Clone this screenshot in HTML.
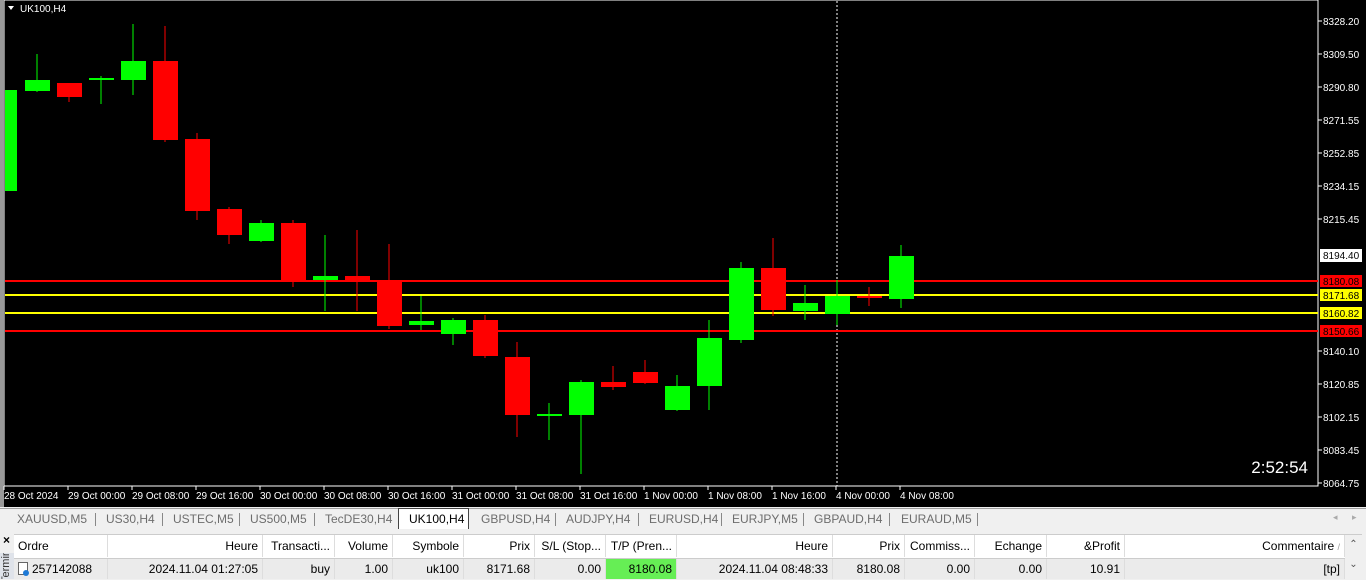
<!DOCTYPE html>
<html><head><meta charset="utf-8"><style>
*{margin:0;padding:0;box-sizing:border-box}
body{width:1366px;height:579px;overflow:hidden;background:#f0f0f0;font-family:"Liberation Sans",sans-serif;position:relative}
#chart{position:absolute;left:0;top:0;width:1366px;height:507px;background:#000}
.tabs{position:absolute;left:0;top:508px;width:1366px;height:21px;background:#f0f0f0;border-top:1px solid #a0a0a0;font-size:12px;color:#6d6d6d}
.tabs span{position:absolute;top:3px}
.tabs i{position:absolute;top:4px;width:1px;height:13px;background:#888}
.act{position:absolute;top:-1px;height:21px;background:#fff;border:1px solid #444;border-bottom:none;color:#000;padding:3px 10px 0}
.tbl{position:absolute;left:14px;top:534px;width:1348px;height:45px;background:#fff;font-size:12px;color:#000;border-top:1px solid #ccc}
.c{position:absolute;height:22px;line-height:22px;border-right:1px solid #ddd;padding:0 4px;white-space:nowrap;overflow:hidden}
.r{text-align:right}
.row{position:absolute;left:0;top:23px;height:21px;width:1331px;background:#ebebeb;border-top:1px solid #ccc}
.row .c{height:20px;line-height:20px}
</style></head><body>
<div id="chart">
<svg width="1366" height="507" xmlns="http://www.w3.org/2000/svg" font-family="Liberation Sans, sans-serif">
<rect x="4" y="0" width="1314" height="486" fill="none" stroke="#fff" stroke-width="1"/>
<rect x="0" y="0" width="4" height="507" fill="#999"/>
<polygon points="8,6 14,6 11,10" fill="#fff"/>
<text x="20" y="12" fill="#fff" font-size="10">UK100,H4</text>
<line x1="837" y1="1" x2="837" y2="486" stroke="#fff" stroke-dasharray="2,2"/>
<g stroke-width="2">
<line x1="5" y1="281" x2="1318" y2="281" stroke="#f00"/>
<line x1="5" y1="295" x2="1318" y2="295" stroke="#ff0"/>
<line x1="5" y1="313" x2="1318" y2="313" stroke="#ff0"/>
<line x1="5" y1="331" x2="1318" y2="331" stroke="#f00"/>
</g>
<g>
<g fill="#0f0" stroke="#0f0">
<rect x="5" y="90" width="12" height="101" stroke="none"/>
<line x1="37" y1="54" x2="37" y2="92"/><rect x="25" y="80" width="25" height="11" stroke="none"/>
<line x1="101" y1="76" x2="101" y2="104"/><rect x="89" y="78" width="25" height="2" stroke="none"/>
<line x1="133" y1="24" x2="133" y2="95"/><rect x="121" y="61" width="25" height="19" stroke="none"/>
<line x1="261" y1="220" x2="261" y2="242"/><rect x="249" y="223" width="25" height="18" stroke="none"/>
<line x1="325" y1="235" x2="325" y2="311"/><rect x="313" y="276" width="25" height="4" stroke="none"/>
<line x1="421" y1="296" x2="421" y2="330"/><rect x="409" y="321" width="25" height="4" stroke="none"/>
<line x1="453" y1="318" x2="453" y2="345"/><rect x="441" y="320" width="25" height="14" stroke="none"/>
<line x1="549" y1="403" x2="549" y2="440"/><rect x="537" y="414" width="25" height="2" stroke="none"/>
<line x1="581" y1="380" x2="581" y2="474"/><rect x="569" y="382" width="25" height="33" stroke="none"/>
<line x1="677" y1="375" x2="677" y2="411"/><rect x="665" y="386" width="25" height="24" stroke="none"/>
<line x1="709" y1="320" x2="709" y2="410"/><rect x="697" y="338" width="25" height="48" stroke="none"/>
<line x1="741" y1="262" x2="741" y2="343"/><rect x="729" y="268" width="25" height="72" stroke="none"/>
<line x1="805" y1="285" x2="805" y2="320"/><rect x="793" y="303" width="25" height="8" stroke="none"/>
<line x1="837" y1="280" x2="837" y2="325"/><rect x="825" y="296" width="25" height="18" stroke="none"/>
<line x1="901" y1="245" x2="901" y2="308"/><rect x="889" y="256" width="25" height="43" stroke="none"/>
</g>
<g fill="#f00" stroke="#f00">
<line x1="69" y1="83" x2="69" y2="102"/><rect x="57" y="83" width="25" height="14" stroke="none"/>
<line x1="165" y1="26" x2="165" y2="142"/><rect x="153" y="61" width="25" height="79" stroke="none"/>
<line x1="197" y1="133" x2="197" y2="220"/><rect x="185" y="139" width="25" height="72" stroke="none"/>
<line x1="229" y1="207" x2="229" y2="244"/><rect x="217" y="209" width="25" height="26" stroke="none"/>
<line x1="293" y1="220" x2="293" y2="287"/><rect x="281" y="223" width="25" height="57" stroke="none"/>
<line x1="357" y1="230" x2="357" y2="311"/><rect x="345" y="276" width="25" height="4" stroke="none"/>
<line x1="389" y1="244" x2="389" y2="329"/><rect x="377" y="280" width="25" height="46" stroke="none"/>
<line x1="485" y1="315" x2="485" y2="358"/><rect x="473" y="320" width="25" height="36" stroke="none"/>
<line x1="517" y1="342" x2="517" y2="437"/><rect x="505" y="357" width="25" height="58" stroke="none"/>
<line x1="613" y1="366" x2="613" y2="390"/><rect x="601" y="382" width="25" height="5" stroke="none"/>
<line x1="645" y1="360" x2="645" y2="384"/><rect x="633" y="372" width="25" height="11" stroke="none"/>
<line x1="773" y1="238" x2="773" y2="316"/><rect x="761" y="268" width="25" height="42" stroke="none"/>
<line x1="869" y1="287" x2="869" y2="306"/><rect x="857" y="296" width="25" height="2" stroke="none"/>
</g>
</g>
<g fill="#fff" font-size="10">
<text x="1323" y="25">8328.20</text><text x="1323" y="58">8309.50</text><text x="1323" y="91">8290.80</text>
<text x="1323" y="124">8271.55</text><text x="1323" y="157">8252.85</text><text x="1323" y="190">8234.15</text>
<text x="1323" y="223">8215.45</text><text x="1323" y="355">8140.10</text><text x="1323" y="388">8120.85</text>
<text x="1323" y="421">8102.15</text><text x="1323" y="454">8083.45</text><text x="1323" y="487">8064.75</text>
</g>
<g stroke="#fff"><line x1="1318" y1="21" x2="1322" y2="21"/><line x1="1318" y1="54" x2="1322" y2="54"/><line x1="1318" y1="87" x2="1322" y2="87"/><line x1="1318" y1="120" x2="1322" y2="120"/><line x1="1318" y1="153" x2="1322" y2="153"/><line x1="1318" y1="186" x2="1322" y2="186"/><line x1="1318" y1="219" x2="1322" y2="219"/><line x1="1318" y1="351" x2="1322" y2="351"/><line x1="1318" y1="384" x2="1322" y2="384"/><line x1="1318" y1="417" x2="1322" y2="417"/><line x1="1318" y1="450" x2="1322" y2="450"/><line x1="1318" y1="483" x2="1322" y2="483"/></g>
<rect x="1320" y="249" width="42" height="13" fill="#fff"/><text x="1323" y="259" fill="#000" font-size="10">8194.40</text>
<rect x="1320" y="275" width="42" height="12" fill="#f00"/><text x="1323" y="285" fill="#000" font-size="10">8180.08</text>
<rect x="1320" y="289" width="42" height="12" fill="#ff0"/><text x="1323" y="299" fill="#000" font-size="10">8171.68</text>
<rect x="1320" y="307" width="42" height="12" fill="#ff0"/><text x="1323" y="317" fill="#000" font-size="10">8160.82</text>
<rect x="1320" y="325" width="42" height="12" fill="#f00"/><text x="1323" y="335" fill="#000" font-size="10">8150.66</text>
<text x="1308" y="473" fill="#fff" font-size="17" text-anchor="end">2:52:54</text>
<g fill="#fff" font-size="10">
<text x="4" y="499">28 Oct 2024</text><text x="68" y="499">29 Oct 00:00</text><text x="132" y="499">29 Oct 08:00</text>
<text x="196" y="499">29 Oct 16:00</text><text x="260" y="499">30 Oct 00:00</text><text x="324" y="499">30 Oct 08:00</text>
<text x="388" y="499">30 Oct 16:00</text><text x="452" y="499">31 Oct 00:00</text><text x="516" y="499">31 Oct 08:00</text>
<text x="580" y="499">31 Oct 16:00</text><text x="644" y="499">1 Nov 00:00</text><text x="708" y="499">1 Nov 08:00</text>
<text x="772" y="499">1 Nov 16:00</text><text x="836" y="499">4 Nov 00:00</text><text x="900" y="499">4 Nov 08:00</text>
</g>
<g stroke="#fff"><line x1="4" y1="486" x2="4" y2="490"/><line x1="68" y1="486" x2="68" y2="490"/><line x1="132" y1="486" x2="132" y2="490"/><line x1="196" y1="486" x2="196" y2="490"/><line x1="260" y1="486" x2="260" y2="490"/><line x1="324" y1="486" x2="324" y2="490"/><line x1="388" y1="486" x2="388" y2="490"/><line x1="452" y1="486" x2="452" y2="490"/><line x1="516" y1="486" x2="516" y2="490"/><line x1="580" y1="486" x2="580" y2="490"/><line x1="644" y1="486" x2="644" y2="490"/><line x1="708" y1="486" x2="708" y2="490"/><line x1="772" y1="486" x2="772" y2="490"/><line x1="836" y1="486" x2="836" y2="490"/><line x1="900" y1="486" x2="900" y2="490"/></g>
</svg>
</div>
<div class="tabs">
<span style="left:17px">XAUUSD,M5</span><i style="left:95px"></i>
<span style="left:106px">US30,H4</span><i style="left:162px"></i>
<span style="left:173px">USTEC,M5</span><i style="left:239px"></i>
<span style="left:250px">US500,M5</span><i style="left:314px"></i>
<span style="left:325px">TecDE30,H4</span>
<div class="act" style="left:398px;width:71px">UK100,H4</div>
<span style="left:481px">GBPUSD,H4</span><i style="left:555px"></i>
<span style="left:566px">AUDJPY,H4</span><i style="left:638px"></i>
<span style="left:649px">EURUSD,H4</span><i style="left:721px"></i>
<span style="left:732px">EURJPY,M5</span><i style="left:803px"></i>
<span style="left:814px">GBPAUD,H4</span><i style="left:889px"></i>
<span style="left:901px">EURAUD,M5</span><i style="left:977px"></i>
<span style="left:1333px;color:#aaa;font-size:9px">◂</span><span style="left:1352px;color:#aaa;font-size:9px">▸</span>
</div>
<div style="position:absolute;left:3px;top:533px;font-size:12px;font-weight:bold">×</div>
<div style="position:absolute;left:0;top:553px;width:14px;height:26px;background:#dfe3ea;overflow:hidden"><div style="position:absolute;left:0;top:30px;font-size:11px;transform:rotate(-90deg);transform-origin:0 0;color:#333">Terminal</div></div>
<div class="tbl">
<div class="c" style="left:0;width:94px">Ordre</div>
<div class="c r" style="left:94px;width:155px">Heure</div>
<div class="c r" style="left:249px;width:72px">Transacti...</div>
<div class="c r" style="left:321px;width:58px">Volume</div>
<div class="c r" style="left:379px;width:71px">Symbole</div>
<div class="c r" style="left:450px;width:71px">Prix</div>
<div class="c r" style="left:521px;width:71px">S/L (Stop...</div>
<div class="c r" style="left:592px;width:71px">T/P (Pren...</div>
<div class="c r" style="left:663px;width:156px">Heure</div>
<div class="c r" style="left:819px;width:72px">Prix</div>
<div class="c r" style="left:891px;width:70px">Commiss...</div>
<div class="c r" style="left:961px;width:72px">Echange</div>
<div class="c r" style="left:1033px;width:78px">&amp;Profit</div>
<div class="c r" style="left:1111px;width:220px">Commentaire <span style="color:#999;font-size:9px">/</span></div>
<div style="position:absolute;left:1331px;top:0;width:17px;height:45px;background:#f0f0f0;font-size:10px;color:#555;text-align:center;line-height:20px">⌃<br>⌄</div>
<div class="row">
<div class="c" style="left:0;width:94px"><span style="display:inline-block;width:10px;height:13px;border:1px solid #666;background:#fff;vertical-align:-2px;margin-right:4px;position:relative"><span style="position:absolute;left:4px;top:7px;width:6px;height:6px;border-radius:3px;background:#1e7ad6"></span></span>257142088</div>
<div class="c r" style="left:94px;width:155px">2024.11.04 01:27:05</div>
<div class="c r" style="left:249px;width:72px">buy</div>
<div class="c r" style="left:321px;width:58px">1.00</div>
<div class="c r" style="left:379px;width:71px">uk100</div>
<div class="c r" style="left:450px;width:71px">8171.68</div>
<div class="c r" style="left:521px;width:71px">0.00</div>
<div class="c r" style="left:592px;width:71px;background:#66ee55">8180.08</div>
<div class="c r" style="left:663px;width:156px">2024.11.04 08:48:33</div>
<div class="c r" style="left:819px;width:72px">8180.08</div>
<div class="c r" style="left:891px;width:70px">0.00</div>
<div class="c r" style="left:961px;width:72px">0.00</div>
<div class="c r" style="left:1033px;width:78px">10.91</div>
<div class="c r" style="left:1111px;width:220px">[tp]</div>
</div>
</div>
</body></html>
